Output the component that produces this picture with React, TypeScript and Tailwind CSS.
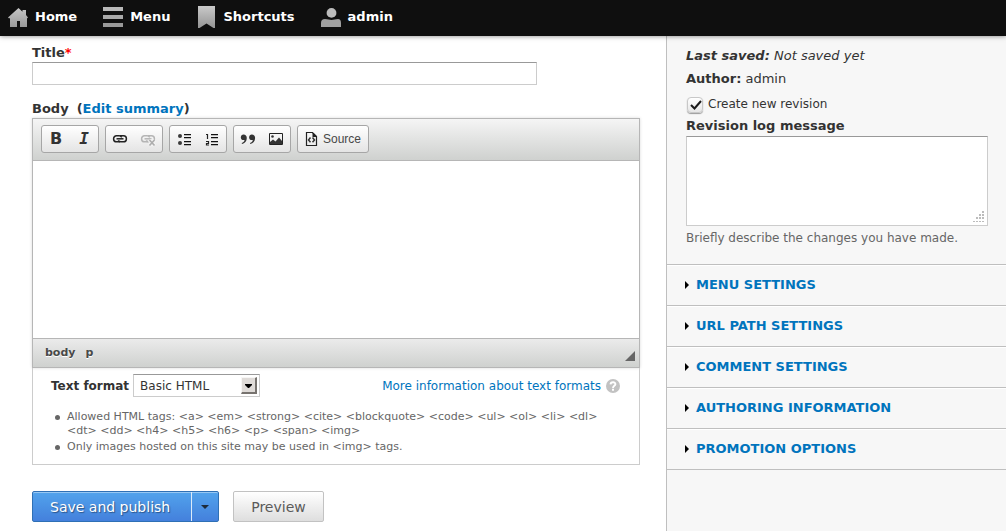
import type { ReactNode } from "react";

const FONT = "font-['DejaVu_Sans',sans-serif]";

function HomeIcon() {
  return (
    <svg width="20" height="20" viewBox="0 0 20 20" aria-hidden="true">
      <defs>
        <linearGradient id="toolGrey" x1="0" y1="0" x2="0" y2="20" gradientUnits="userSpaceOnUse">
          <stop offset="0" stopColor="#c9c9c9" />
          <stop offset="1" stopColor="#999999" />
        </linearGradient>
      </defs>
      <path
        fill="url(#toolGrey)"
        d="M10.500 1 14.500 4.800V3h3.500v5l2 2.500-.8.700H19V20h-7v-6H9v6H2v-8.800H.8L0 10.500z"
      />
    </svg>
  );
}

function MenuIcon() {
  return (
    <svg width="20" height="20" viewBox="0 0 20 20" aria-hidden="true">
      <path fill="#b9b9b9" d="M0 0h20v4H0z" />
      <path fill="#a9a9a9" d="M0 8h20v4H0z" />
      <path fill="#999999" d="M0 16h20v4H0z" />
    </svg>
  );
}

function ShortcutsIcon() {
  return (
    <svg width="18" height="22" viewBox="0 0 18 22" aria-hidden="true">
      <path fill="url(#toolGrey)" d="M0 0h17v22h-1.500l-7-4.500-7 4.500H0z" />
    </svg>
  );
}

function UserIcon() {
  return (
    <svg width="20" height="20" viewBox="0 0 20 20" aria-hidden="true">
      <circle cx="10.500" cy="5.900" r="4.900" fill="#bcbcbc" />
      <path fill="#a0a0a0" d="M0 20v-4q0-4 4-4 2 0 3.500.5 3 .8 6 0 1.500-.5 3.500-.5 3 0 3 4v4z" />
    </svg>
  );
}

function LinkShape({ color }: { color: string }) {
  return (
    <g fill="none" stroke={color} strokeWidth="1.500">
      <path d="M8 10.800H4.500a2.900 2.900 0 0 1-2.900-2.900v-.2a2.900 2.900 0 0 1 2.900-2.900h2.700a2.900 2.900 0 0 1 2.500 1.500" />
      <path d="M8 4.800h3.500a2.900 2.900 0 0 1 2.900 2.900v.2a2.900 2.900 0 0 1-2.900 2.900H8.800a2.900 2.900 0 0 1-2.500-1.500" />
      <path d="M4.500 7.800h7" />
    </g>
  );
}

function LinkIcon() {
  return (
    <svg width="16" height="16" viewBox="0 0 16 16" aria-hidden="true">
      <LinkShape color="#222222" />
    </svg>
  );
}

function UnlinkIcon() {
  return (
    <svg width="16" height="16" viewBox="0 0 16 16" aria-hidden="true">
      <LinkShape color="#b5b5b5" />
      <path stroke="#f4f4f4" strokeWidth="4" d="m9.500 9 5 5.500m0-5.500-5 5.500" />
      <path stroke="#adadad" strokeWidth="1.700" d="m9.500 9 5 5.500m0-5.500-5 5.500" />
    </svg>
  );
}

function BulletsIcon() {
  return (
    <svg width="16" height="16" viewBox="0 0 16 16" aria-hidden="true">
      <circle cx="4" cy="5" r="2" fill="#3a3a3a" />
      <circle cx="4" cy="12" r="2" fill="#3a3a3a" />
      <path fill="#111" d="M8 3h7v1.300H8zM8 6h7v1.300H8zM8 10h7v1.300H8zM8 13h7v1.300H8z" />
    </svg>
  );
}

function NumbersIcon() {
  return (
    <svg width="16" height="16" viewBox="0 0 16 16" aria-hidden="true">
      <path fill="#111" d="M7 3h7v1.300H7zM7 6h7v1.300H7zM7 10h7v1.300H7zM7 13h7v1.300H7z" />
      <path fill="none" stroke="#222" strokeWidth="1.200" d="M2 3.500h1.500V8M2 10.500h2.500v2h-2v1.500H5" />
    </svg>
  );
}

function QuoteIcon() {
  return (
    <svg width="16" height="16" viewBox="0 0 16 16" aria-hidden="true">
      <path
        fill="#333"
        d="M3.500 3.500C5.500 3.500 6.800 4.800 6.800 7c0 3.200-2 5.300-4.800 6l-.3-1c1.800-.7 2.700-1.700 2.800-3-2 .5-3.700-.7-3.700-2.600 0-1.700 1.200-2.900 2.700-2.900zM11.800 3.500c2 0 3.300 1.300 3.300 3.500 0 3.200-2 5.300-4.800 6l-.3-1c1.800-.7 2.700-1.700 2.800-3-2 .5-3.700-.7-3.700-2.600 0-1.700 1.200-2.900 2.700-2.900z"
      />
    </svg>
  );
}

function ImageIcon() {
  return (
    <svg width="16" height="16" viewBox="0 0 16 16" aria-hidden="true">
      <path fill="none" stroke="#222" d="M1.500 2.500h13v11h-13z" />
      <circle cx="4.500" cy="5.500" r="1.300" fill="#333" />
      <path fill="#333" d="M2 13v-2l3-2.500 2.500 2L11 6.500l3 3.500v3z" />
    </svg>
  );
}

function SourceIcon() {
  return (
    <svg width="16" height="16" viewBox="0 0 16 16" aria-hidden="true">
      <path fill="none" stroke="#222" strokeWidth="1.200" d="M3.500 1.500h6l4 4v9h-10z" />
      <path fill="none" stroke="#333" strokeWidth="1.500" d="M7.500 6.500 5.500 8.900l2 2.400M9.500 6.500l2 2.400-2 2.400" />
      <path fill="#222" d="M9.500 2h1l3 3v1h-4z" />
    </svg>
  );
}

function HelpIcon() {
  return (
    <svg width="14" height="14" viewBox="0 0 14 14" aria-hidden="true">
      <circle cx="7" cy="7" r="7" fill="#c2c2c2" />
      <path fill="none" stroke="#fff" strokeWidth="1.900" d="M4.500 5.400C4.700 2.500 9.500 2.600 9.400 5.200 9.300 6.800 7 6.800 7 8.900" />
      <path fill="#fff" d="M6 9.800h2v1.900H6z" />
    </svg>
  );
}

function NavItem({ icon, children }: { icon: ReactNode; children: ReactNode }) {
  return (
    <a href="#" className="flex items-center gap-[7px] text-[13px] leading-4 font-bold text-white">
      {icon}
      {children}
    </a>
  );
}

function ToolGroup({ children }: { children: ReactNode }) {
  return (
    <div className="flex h-7 rounded-[3px] border border-[#a6a6a6] bg-linear-to-b from-white to-[#e4e4e4]">
      {children}
    </div>
  );
}

function Tool({ label, disabled, children }: { label: string; disabled?: boolean; children: ReactNode }) {
  return (
    <button
      type="button"
      aria-label={label}
      disabled={disabled}
      className="flex w-7 items-center justify-center text-[#333333]"
    >
      {children}
    </button>
  );
}

function Hint({ children }: { children: ReactNode }) {
  return (
    <li className="flex gap-[7px] before:mt-[5px] before:size-[5px] before:shrink-0 before:rounded-full before:bg-[#666666]">
      <span>{children}</span>
    </li>
  );
}

const panels = [
  "Menu settings",
  "URL path settings",
  "Comment settings",
  "Authoring information",
  "Promotion options",
];

export default function App() {
  return (
    <div className={`${FONT} flex min-h-screen flex-col bg-white text-[13px] leading-4 text-[#333333]`}>
      <header className="relative z-10 bg-[#0f0f0f] shadow-[0_0_5px_rgba(0,0,0,0.5)]">
        <nav className="flex h-9 items-center gap-[26px] px-2 pb-0.5">
          <NavItem icon={<HomeIcon />}>Home</NavItem>
          <NavItem icon={<MenuIcon />}>Menu</NavItem>
          <div className="pl-0.5">
            <NavItem icon={<ShortcutsIcon />}>Shortcuts</NavItem>
          </div>
          <NavItem icon={<UserIcon />}>admin</NavItem>
        </nav>
      </header>

      <div className="grid flex-1 grid-cols-[minmax(0,1fr)_340px]">
        <main className="px-8 pt-[9px] pr-[26px]">
          <label htmlFor="title" className="block font-bold">
            Title<span className="text-[#ff0000]">*</span>
          </label>
          <input
            id="title"
            type="text"
            className="mt-px block h-[23px] w-[505px] max-w-full border border-[#cccccc] border-t-[#999999] bg-white px-1.5 text-[13px] outline-none"
          />

          <div className="mt-4 flex gap-2 font-bold">
            <label htmlFor="body">Body</label>
            <span>
              (
              <a href="#" className="text-[#0074bd]">
                Edit summary
              </a>
              )
            </span>
          </div>

          <div className="mt-px border border-[#b6b6b6] shadow-[0_0_3px_rgba(0,0,0,0.15)]">
            <div className="flex flex-wrap gap-1.5 border-b border-[#b6b6b6] bg-linear-to-b from-[#f5f5f5] to-[#cfd1cf] px-2 pt-1.5 pb-[7px]">
              <ToolGroup>
                <Tool label="Bold">
                  <span className="text-base leading-4 font-bold">B</span>
                </Tool>
                <Tool label="Italic">
                  <span className="font-['DejaVu_Sans_Mono',monospace] text-base leading-4 font-bold italic">I</span>
                </Tool>
              </ToolGroup>
              <ToolGroup>
                <Tool label="Link">
                  <LinkIcon />
                </Tool>
                <Tool label="Unlink" disabled>
                  <UnlinkIcon />
                </Tool>
              </ToolGroup>
              <ToolGroup>
                <Tool label="Bulleted list">
                  <BulletsIcon />
                </Tool>
                <Tool label="Numbered list">
                  <NumbersIcon />
                </Tool>
              </ToolGroup>
              <ToolGroup>
                <Tool label="Block quote">
                  <QuoteIcon />
                </Tool>
                <Tool label="Image">
                  <ImageIcon />
                </Tool>
              </ToolGroup>
              <ToolGroup>
                <button
                  type="button"
                  className="flex items-center gap-1 pr-[7px] pl-[5px] font-['Liberation_Sans',sans-serif] text-xs text-[#484848]"
                >
                  <SourceIcon />
                  Source
                </button>
              </ToolGroup>
            </div>
            <textarea id="body" className="block h-[177px] w-full resize-none bg-white p-5 outline-none" />
            <div className="flex h-[29px] items-center border-t border-[#b6b6b6] bg-linear-to-b from-[#ebebeb] to-[#cfd1cf] pr-1 pb-px pl-3 text-[11px] font-bold text-[#484848]">
              <span className="flex flex-1 gap-2.5 text-shadow-[0_1px_0_#ffffff]">
                <span>body</span>
                <span>p</span>
              </span>
              <svg width="10" height="10" viewBox="0 0 10 10" className="mt-1.5" aria-hidden="true">
                <path fill="#666" d="M10 0v10H0z" />
              </svg>
            </div>
          </div>

          <section className="border border-t-0 border-[#cccccc] pt-1.5 pr-[19px] pb-2.5 pl-[18px] text-xs">
            <div className="flex items-center justify-between">
              <div className="flex items-center gap-1">
                <label htmlFor="format" className="font-bold">
                  Text format
                </label>
                <div className="relative">
                  <select
                    id="format"
                    className="block h-[23px] w-[127px] appearance-none border border-[#cccccc] border-t-[#999999] bg-white px-1.5 text-xs text-[#333333] outline-none"
                  >
                    <option>Basic HTML</option>
                  </select>
                  <svg
                    width="16"
                    height="17"
                    viewBox="0 0 16 17"
                    className="pointer-events-none absolute top-[3px] right-[3px]"
                    aria-hidden="true"
                  >
                    <path fill="#dfdbd8" d="M0 0h16v17H0z" />
                    <path fill="#f7f6f5" d="M0 0h16v1H1v16H0z" />
                    <path fill="#77736f" d="M16 0v17H0l1-2h13V1z" />
                    <path fill="#dfdbd8" d="M1 1h13v14H1z" />
                    <path fill="#000" d="M4 7h7v1L8 11H7L4 8z" />
                  </svg>
                </div>
              </div>
              <a href="#" className="flex items-center gap-[5px] text-[#0074bd]">
                More information about text formats
                <HelpIcon />
              </a>
            </div>
            <ul className="mt-[13px] flex flex-col gap-0.5 pr-3 pl-1 text-[11px] leading-[14px] text-[#666666]">
              <Hint>
                Allowed HTML tags: &lt;a&gt; &lt;em&gt; &lt;strong&gt; &lt;cite&gt; &lt;blockquote&gt; &lt;code&gt;
                &lt;ul&gt; &lt;ol&gt; &lt;li&gt; &lt;dl&gt; &lt;dt&gt; &lt;dd&gt; &lt;h4&gt; &lt;h5&gt; &lt;h6&gt;
                &lt;p&gt; &lt;span&gt; &lt;img&gt;
              </Hint>
              <Hint>Only images hosted on this site may be used in &lt;img&gt; tags.</Hint>
            </ul>
          </section>

          <div className="mt-[26px] mb-2 flex gap-3.5 text-sm">
            <div className="flex h-[31px] rounded-[2px] border border-[#2f70b5] bg-linear-to-b from-[#52a3ec] to-[#4480dc] shadow-[inset_0_1px_0_rgba(255,255,255,0.4)]">
              <button
                type="button"
                className="border-r border-[#dcebf9] pr-[21px] pl-[17px] text-white text-shadow-[1px_1px_1px_rgba(0,0,0,0.4)]"
              >
                Save and publish
              </button>
              <button type="button" aria-label="More save options" className="flex w-[26px] items-center justify-center">
                <svg width="8" height="4" viewBox="0 0 8 4" aria-hidden="true">
                  <path fill="#1d2b3a" d="M0 0h8L4 4z" />
                </svg>
              </button>
            </div>
            <button
              type="button"
              className="h-[31px] rounded-[2px] border border-[#c2c2c2] bg-linear-to-b from-white to-[#dedede] px-[17px] text-[#5a5a5a]"
            >
              Preview
            </button>
          </div>
        </main>

        <aside className="border-l border-[#bfbfbf] bg-[#f7f7f7]">
          <div className="px-[18px] pt-3 pb-[18px] pl-[19px]">
            <p className="italic">
              <strong>Last saved:</strong> Not saved yet
            </p>
            <p className="mt-[7px]">
              <strong>Author:</strong> admin
            </p>
            <div className="mt-2 flex items-center gap-1 text-xs leading-4">
              <span className="relative mt-0.5 flex h-4 w-[18px] items-center justify-center">
                <input
                  id="revision"
                  type="checkbox"
                  defaultChecked
                  className="size-4 appearance-none rounded-[4px] border border-[#c8c8c8] bg-linear-to-b from-white to-[#e6e6e6] shadow-[0_1px_1px_#999999]"
                />
                <svg
                  width="12"
                  height="10"
                  viewBox="0 0 12 10"
                  className="pointer-events-none absolute top-[3px] left-1"
                  aria-hidden="true"
                >
                  <path fill="none" stroke="#1a1a1a" strokeWidth="2" d="m1 5 3.500 3.500L11 1" />
                </svg>
              </span>
              <label htmlFor="revision">Create new revision</label>
            </div>
            <label htmlFor="log" className="mt-[5px] block font-bold">
              Revision log message
            </label>
            <div className="relative mt-0.5">
              <textarea
                id="log"
                className="block h-[90px] w-full resize-none border border-[#cccccc] border-t-[#999999] bg-white p-1.5 text-[13px] outline-none"
              />
              <svg
                width="11"
                height="11"
                viewBox="0 0 11 11"
                className="pointer-events-none absolute right-1 bottom-1"
                fill="#bcbcbc"
                aria-hidden="true"
              >
                <path d="M9 0h2v2H9zM6 3h2v2H6zM9 3h2v2H9zM3 6h2v2H3zM6 6h2v2H6zM9 6h2v2H9zM0 10h2v1H0zM3 10h2v1H3zM6 10h2v1H6zM9 10h2v1H9z" />
              </svg>
            </div>
            <p className="mt-1 text-xs leading-4 text-[#666666]">Briefly describe the changes you have made.</p>
          </div>
          <div className="border-b border-[#bfbfbf]">
            {panels.map((name) => (
              <button
                key={name}
                type="button"
                className="flex h-[41px] w-full items-center gap-[7px] border-t border-[#bfbfbf] pl-[18px] text-left font-bold text-[#0074bd] uppercase shadow-[inset_0_1px_0_#ffffff]"
              >
                <svg width="4" height="8" viewBox="0 0 4 8" aria-hidden="true">
                  <path fill="#000" d="m0 0 4 4-4 4z" />
                </svg>
                {name}
              </button>
            ))}
          </div>
        </aside>
      </div>
    </div>
  );
}
